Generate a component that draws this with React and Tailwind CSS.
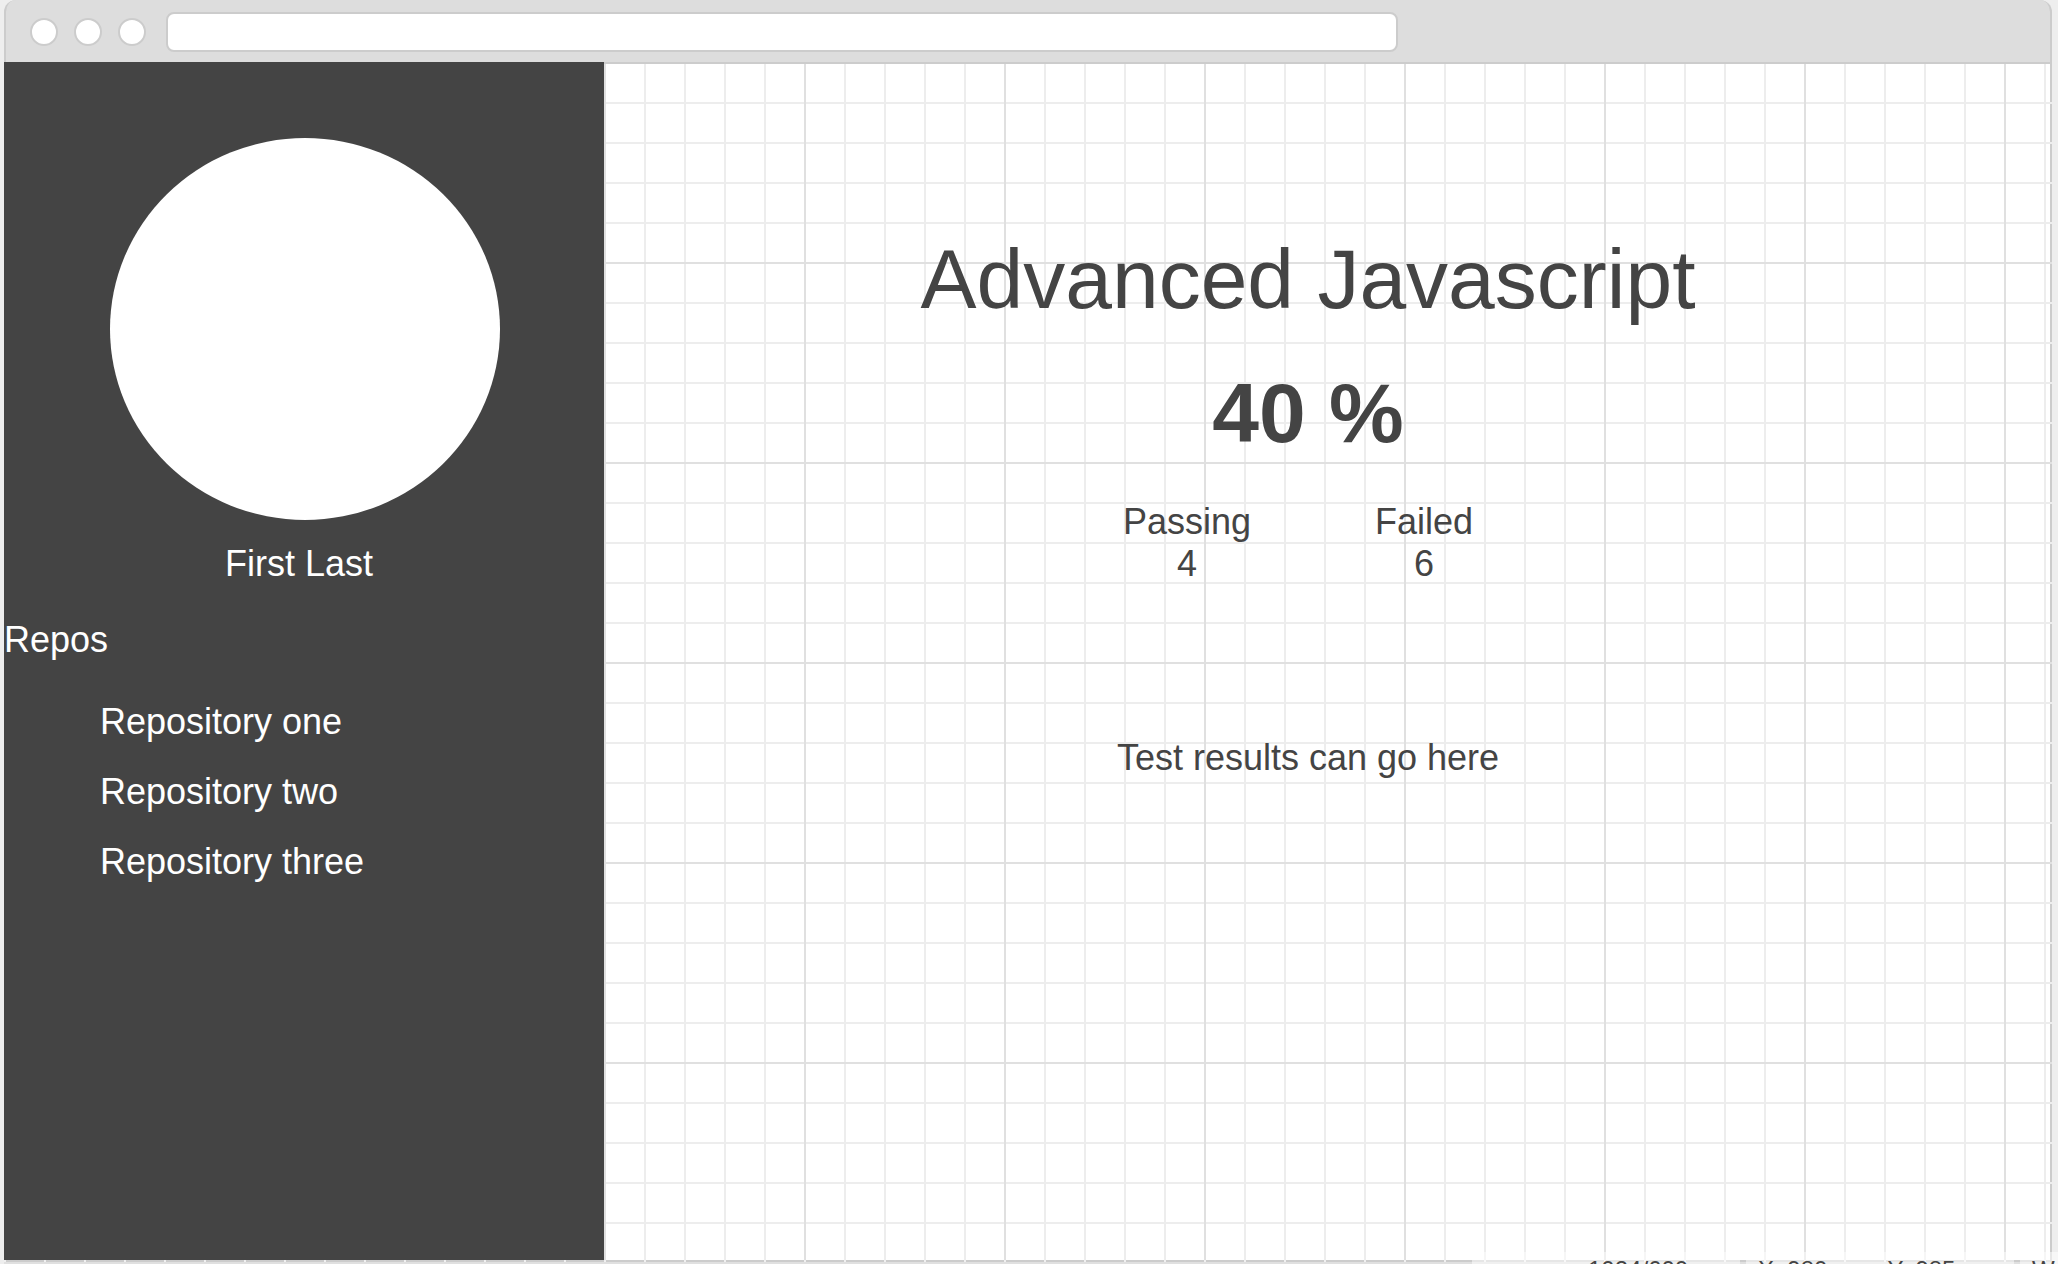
const repos = ["Repository one", "Repository two", "Repository three"];
const results = [
  { label: "Passing", count: 4 },
  { label: "Failed", count: 6 },
];

function BrowserBar() {
  return (
    <header className="flex h-16 items-center rounded-t-xl border-2 border-t-0 border-[#ccc] bg-[#ddd] pt-0.5 pl-6">
      <div className="flex gap-4">
        <button aria-label="Close" className="size-7 rounded-full border-2 border-[#ccc] bg-white" />
        <button aria-label="Minimize" className="size-7 rounded-full border-2 border-[#ccc] bg-white" />
        <button aria-label="Maximize" className="size-7 rounded-full border-2 border-[#ccc] bg-white" />
      </div>
      <input aria-label="Address" className="ml-5 h-10 w-[61%] rounded-lg border-2 border-[#ccc] bg-white px-3" />
    </header>
  );
}

function Sidebar() {
  return (
    <aside className="-mt-0.5 flex w-[600px] shrink-0 flex-col bg-[#444] text-white">
      <div className="mt-[76px] ml-[106px] h-[382px] w-[390px] rounded-[50%] bg-white" />
      <p className="mt-[23px] w-[590px] text-center">First Last</p>
      <h2 className="mt-[34px]">Repos</h2>
      <ul className="mt-10 ml-24 flex flex-col gap-7">
        {repos.map((name) => (
          <li key={name}>
            <a href="#">{name}</a>
          </li>
        ))}
      </ul>
    </aside>
  );
}

/* Grid paper: heavy lines every 200px, light lines every 40px, and the frame's right edge. */
const gridPaper =
  "[background:linear-gradient(90deg,#e0e0e0_2px,transparent_2px)_0_0/200px_200px,linear-gradient(#e0e0e0_2px,transparent_2px)_0_198px/200px_200px,linear-gradient(90deg,#ededed_2px,transparent_2px)_0_0/40px_40px,linear-gradient(#ededed_2px,transparent_2px)_0_38px/40px_40px,linear-gradient(#ccc,#ccc)_right/2px_100%_no-repeat,white]";

const frameEdge =
  "[background:linear-gradient(90deg,#f0f0f0_2px,transparent_2px)_0_0/40px_2px_repeat-x,linear-gradient(#ccc_2px,#e0e0e0_2px)]";

function StatusBar() {
  return (
    <div className="absolute right-0 bottom-0 flex h-3 gap-1.5 overflow-hidden text-[24px] leading-[24px] text-[#444]">
      <div className="w-[268px] bg-white/50 pt-1.5 pl-29">1024/600</div>
      <div className="flex w-[268px] gap-15 bg-white/50 pt-1.5 pl-3">
        <span>X: 980</span>
        <span>Y: 985</span>
      </div>
      <div className="w-[38px] overflow-hidden bg-white/50 pt-1.5 pl-3">W</div>
    </div>
  );
}

export default function App() {
  return (
    <div className="relative flex h-screen flex-col overflow-hidden bg-[#eee] pr-1.5 pl-1 font-['Liberation_Sans',Arial,sans-serif] text-[36px] leading-[42px] text-[#444]">
      <BrowserBar />
      <div className="flex min-h-0 flex-1">
        <Sidebar />
        <main className={`flex flex-1 flex-col items-center pr-10 ${gridPaper}`}>
          <h1 className="mt-[161px] text-[84px] leading-[108px]">Advanced Javascript</h1>
          <p className="mt-[26px] text-[84px] leading-[108px] font-bold">40 %</p>
          <dl className="mt-[34px] mr-5 flex gap-31 text-center">
            {results.map((r) => (
              <div key={r.label}>
                <dt>{r.label}</dt>
                <dd>{r.count}</dd>
              </div>
            ))}
          </dl>
          <p className="mt-38">Test results can go here</p>
        </main>
      </div>
      <div className={`h-1 ${frameEdge}`} />
      <StatusBar />
    </div>
  );
}
